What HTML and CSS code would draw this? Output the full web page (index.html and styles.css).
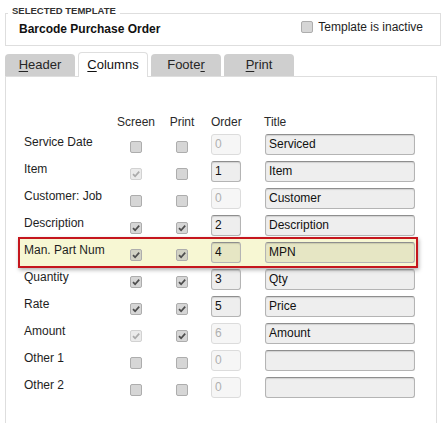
FILE: index.html
```html
<!DOCTYPE html>
<html>
<head>
<meta charset="utf-8">
<link rel="stylesheet" href="styles.css">
</head>
<body>
<div class="page">
  <div class="tpl">
    <div class="legend">SELECTED TEMPLATE</div>
    <div class="tpl-row">
      <div class="tpl-name">Barcode Purchase Order</div>
      <div class="inactive"><span class="cb"></span><span>Template is inactive</span></div>
    </div>
  </div>

  <div class="tabs">
    <div class="tab"><u>H</u>eader</div>
    <div class="tab active"><u>C</u>olumns</div>
    <div class="tab">Foote<u>r</u></div>
    <div class="tab"><u>P</u>rint</div>
  </div>

  <div class="panel">
    <div class="grid head">
      <span></span>
      <span class="hc">Screen</span>
      <span class="hc">Print</span>
      <span class="ho">Order</span>
      <span class="ht">Title</span>
    </div>

    <div class="grid row">
      <span class="lbl">Service Date</span>
      <span class="cb"></span>
      <span class="cb"></span>
      <span class="ord dis">0</span>
      <span class="ttl">Serviced</span>
    </div>

    <div class="grid row">
      <span class="lbl">Item</span>
      <span class="cb dis"><svg viewBox="0 0 10 10"><path d="M2 5.1 L4.1 7.2 L8.2 2.6"/></svg></span>
      <span class="cb"></span>
      <span class="ord">1</span>
      <span class="ttl">Item</span>
    </div>

    <div class="grid row">
      <span class="lbl">Customer: Job</span>
      <span class="cb"></span>
      <span class="cb"></span>
      <span class="ord dis">0</span>
      <span class="ttl">Customer</span>
    </div>

    <div class="grid row">
      <span class="lbl">Description</span>
      <span class="cb"><svg viewBox="0 0 10 10"><path d="M2 5.1 L4.1 7.2 L8.2 2.6"/></svg></span>
      <span class="cb"><svg viewBox="0 0 10 10"><path d="M2 5.1 L4.1 7.2 L8.2 2.6"/></svg></span>
      <span class="ord">2</span>
      <span class="ttl">Description</span>
    </div>

    <div class="grid row hl">
      <span class="lbl">Man. Part Num</span>
      <span class="cb"><svg viewBox="0 0 10 10"><path d="M2 5.1 L4.1 7.2 L8.2 2.6"/></svg></span>
      <span class="cb"><svg viewBox="0 0 10 10"><path d="M2 5.1 L4.1 7.2 L8.2 2.6"/></svg></span>
      <span class="ord">4</span>
      <span class="ttl">MPN</span>
    </div>

    <div class="grid row">
      <span class="lbl">Quantity</span>
      <span class="cb"><svg viewBox="0 0 10 10"><path d="M2 5.1 L4.1 7.2 L8.2 2.6"/></svg></span>
      <span class="cb"><svg viewBox="0 0 10 10"><path d="M2 5.1 L4.1 7.2 L8.2 2.6"/></svg></span>
      <span class="ord">3</span>
      <span class="ttl">Qty</span>
    </div>

    <div class="grid row">
      <span class="lbl">Rate</span>
      <span class="cb"><svg viewBox="0 0 10 10"><path d="M2 5.1 L4.1 7.2 L8.2 2.6"/></svg></span>
      <span class="cb"><svg viewBox="0 0 10 10"><path d="M2 5.1 L4.1 7.2 L8.2 2.6"/></svg></span>
      <span class="ord">5</span>
      <span class="ttl">Price</span>
    </div>

    <div class="grid row">
      <span class="lbl">Amount</span>
      <span class="cb dis"><svg viewBox="0 0 10 10"><path d="M2 5.1 L4.1 7.2 L8.2 2.6"/></svg></span>
      <span class="cb"><svg viewBox="0 0 10 10"><path d="M2 5.1 L4.1 7.2 L8.2 2.6"/></svg></span>
      <span class="ord dis">6</span>
      <span class="ttl">Amount</span>
    </div>

    <div class="grid row">
      <span class="lbl">Other 1</span>
      <span class="cb"></span>
      <span class="cb"></span>
      <span class="ord dis">0</span>
      <span class="ttl"></span>
    </div>

    <div class="grid row">
      <span class="lbl">Other 2</span>
      <span class="cb"></span>
      <span class="cb"></span>
      <span class="ord dis">0</span>
      <span class="ttl"></span>
    </div>
  </div>
</div>
</body>
</html>
```

FILE: styles.css
```css
html, body {
  margin: 0;
  padding: 0;
  background: #fff;
}

body {
  font-family: "Liberation Sans", Arial, sans-serif;
  font-size: 12px;
  color: #1e1e1e;
  overflow: hidden;
}

.page {
  padding-left: 5px;
  padding-top: 13px;
}

/* Selected template box */
.tpl {
  box-sizing: border-box;
  width: 436px;
  height: 33px;
  border: 1px solid #dedede;
}

.legend {
  width: fit-content;
  margin: -9px 0 0 2px;
  padding: 0 4px;
  background: #fff;
  font-size: 9.5px;
  line-height: 11px;
  font-weight: bold;
  color: #333;
}

.tpl-row {
  display: flex;
  justify-content: space-between;
  align-items: flex-start;
  padding: 0 17px 0 13px;
  margin-top: 5px;
}

.tpl-name {
  font-weight: bold;
  line-height: 16px;
  color: #111;
}

.inactive {
  display: flex;
  align-items: center;
  gap: 5px;
  line-height: 16px;
  margin-top: -2px;
  color: #1e1e1e;
}

/* Tabs */
.tabs {
  display: flex;
  align-items: flex-end;
  gap: 3px;
  margin-top: 6px;
  margin-bottom: -1px;
}

.tab {
  box-sizing: border-box;
  width: 70px;
  height: 22px;
  margin-bottom: 1px;
  line-height: 22px;
  font-size: 13px;
  text-align: center;
  background: #cfcfcf;
  color: #262626;
  border-radius: 4px 4px 0 0;
}

.tab u {
  text-decoration-thickness: 1px;
  text-underline-offset: 2px;
}

.tab.active {
  position: relative;
  z-index: 1;
  height: 25px;
  margin-bottom: 0;
  padding: 1px 0 1px;
  background: #fff;
  border: 1px solid #dedede;
  border-bottom: none;
  color: #111;
}

/* Panel */
.panel {
  box-sizing: border-box;
  width: 432px;
  height: 350px;
  border: 1px solid #dedede;
  border-bottom: none;
  padding: 38px 0 0 18px;
}

.grid {
  display: grid;
  grid-template-columns: 93px 38px 54px 56px 150px;
}

.head {
  height: 19px;
  line-height: 14px;
  color: #2a2a2a;
}

.hc {
  justify-self: center;
}

.ho {
  margin-left: 2px;
}

.ht {
  margin-left: -1px;
}

.row {
  height: 21px;
  margin-bottom: 6px;
}

.lbl {
  line-height: 16px;
  white-space: nowrap;
  color: #1e1e1e;
}

.cb {
  box-sizing: border-box;
  display: inline-block;
  width: 12px;
  height: 12px;
  border: 1px solid #adadad;
  border-radius: 2px;
  background: #d6d6d6;
  color: #4e4e4e;
}

.row .cb {
  justify-self: center;
  margin-top: 7px;
}

.cb svg {
  display: block;
  width: 10px;
  height: 10px;
}

.cb path {
  fill: none;
  stroke: currentColor;
  stroke-width: 1.7;
}

.cb.dis {
  background: #ebebeb;
  border-color: #d2d2d2;
  color: #ababab;
}

.ord,
.ttl {
  box-sizing: border-box;
  height: 21px;
  line-height: 19px;
  padding-left: 3px;
  border: 1px solid #b4b4b4;
  border-top-color: #8e8e8e;
  border-radius: 3px;
  background: rgba(0, 0, 0, 0.065);
  box-shadow: inset 0 1px 1px rgba(0, 0, 0, 0.12);
  color: #111;
}

.ord {
  width: 30px;
  margin-left: 2px;
}

.ord.dis {
  background: rgba(0, 0, 0, 0.035);
  border-color: #dcdcdc;
  box-shadow: none;
  color: #b0b0b0;
}

.ttl {
  width: 150px;
}

/* Highlighted row */
.row.hl {
  margin: -5px 0 1px -6px;
  padding: 3px 1px 3px 4px;
  width: 400px;
  height: 31px;
  box-sizing: border-box;
  background: #f7f7d3;
  border: 2px solid #c5161d;
  box-shadow: 1px 2px 4px rgba(0, 0, 0, 0.3);
}

.row.hl .cb {
  background: #d2d2c4;
}
```
